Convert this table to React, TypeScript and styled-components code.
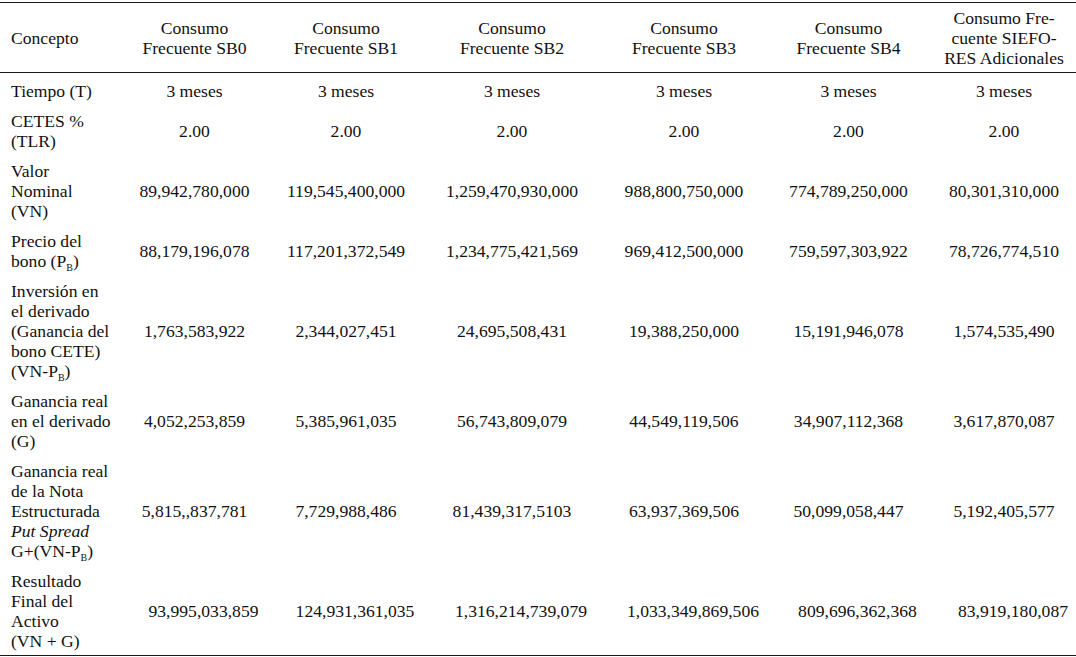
import React from "react";
import styled, { createGlobalStyle } from "styled-components";

const GlobalStyle = createGlobalStyle`
    html, body {
        margin: 0;
        padding: 0;
        background: #ffffff;
    }
    body {
        font-family: "Liberation Serif", "Times New Roman", serif;
        color: #111111;
    }
`;

const Table = styled.table`
    width: 1076px;
    margin-top: 2px;
    border-collapse: collapse;
    table-layout: fixed;
    font-family: "Liberation Serif", "Times New Roman", serif;
    font-size: 17.6px;
    line-height: 20px;
    color: #111111;
    border-top: 1px solid #1a1a1a;
    border-bottom: 1px solid #1a1a1a;
`;

const HeadCell = styled.th<{ $align: "left" | "center" }>`
    font-weight: normal;
    text-align: ${(p) => p.$align};
    vertical-align: middle;
    padding: 5px 4px 4px ${(p) => (p.$align === "left" ? "11px" : "4px")};
    border-bottom: 1px solid #1a1a1a;
    white-space: nowrap;
`;

const BodyRow = styled.tr<{ $first: boolean }>`
    & > td {
        padding-top: ${(p) => (p.$first ? "8px" : "6px")};
        padding-bottom: 4px;
    }
`;

const ConceptCell = styled.td`
    text-align: left;
    vertical-align: middle;
    padding-left: 11px;
    padding-right: 5px;
    white-space: nowrap;
`;

const ValueCell = styled.td<{ $shifted: boolean }>`
    text-align: center;
    vertical-align: middle;
    padding-left: ${(p) => (p.$shifted ? "20px" : "2px")};
    padding-right: 2px;
    white-space: nowrap;
`;

const Sub = styled.span`
    font-size: 10px;
    line-height: 0;
    vertical-align: -4px;
`;

const Italic = styled.i`
    font-style: italic;
`;

interface RowData {
    concept: React.ReactNode[];
    values: string[];
    shifted?: boolean;
}

const columnWidths = [118, 153, 150, 182, 162, 167, 144];

const headers: string[][] = [
    ["Consumo", "Frecuente SB0"],
    ["Consumo", "Frecuente SB1"],
    ["Consumo", "Frecuente SB2"],
    ["Consumo", "Frecuente SB3"],
    ["Consumo", "Frecuente SB4"],
    ["Consumo Fre-", "cuente SIEFO-", "RES Adicionales"],
];

const PB: React.FC = () => (
    <>
        P<Sub>B</Sub>
    </>
);

const rows: RowData[] = [
    {
        concept: ["Tiempo (T)"],
        values: ["3 meses", "3 meses", "3 meses", "3 meses", "3 meses", "3 meses"],
    },
    {
        concept: ["CETES %", "(TLR)"],
        values: ["2.00", "2.00", "2.00", "2.00", "2.00", "2.00"],
    },
    {
        concept: ["Valor", "Nominal", "(VN)"],
        values: [
            "89,942,780,000",
            "119,545,400,000",
            "1,259,470,930,000",
            "988,800,750,000",
            "774,789,250,000",
            "80,301,310,000",
        ],
    },
    {
        concept: [
            "Precio del",
            <>
                bono (<PB />)
            </>,
        ],
        values: [
            "88,179,196,078",
            "117,201,372,549",
            "1,234,775,421,569",
            "969,412,500,000",
            "759,597,303,922",
            "78,726,774,510",
        ],
    },
    {
        concept: [
            "Inversión en",
            "el derivado",
            "(Ganancia del",
            "bono CETE)",
            <>
                (VN-<PB />)
            </>,
        ],
        values: [
            "1,763,583,922",
            "2,344,027,451",
            "24,695,508,431",
            "19,388,250,000",
            "15,191,946,078",
            "1,574,535,490",
        ],
    },
    {
        concept: ["Ganancia real", "en el derivado", "(G)"],
        values: [
            "4,052,253,859",
            "5,385,961,035",
            "56,743,809,079",
            "44,549,119,506",
            "34,907,112,368",
            "3,617,870,087",
        ],
    },
    {
        concept: [
            "Ganancia real",
            "de la Nota",
            "Estructurada",
            <Italic>Put Spread</Italic>,
            <>
                G+(VN-<PB />)
            </>,
        ],
        values: [
            "5,815,,837,781",
            "7,729,988,486",
            "81,439,317,5103",
            "63,937,369,506",
            "50,099,058,447",
            "5,192,405,577",
        ],
    },
    {
        concept: ["Resultado", "Final del", "Activo", "(VN + G)"],
        values: [
            "93,995,033,859",
            "124,931,361,035",
            "1,316,214,739,079",
            "1,033,349,869,506",
            "809,696,362,368",
            "83,919,180,087",
        ],
        shifted: true,
    },
];

const App: React.FC = () => {
    return (
        <>
            <GlobalStyle />
            <Table>
                <colgroup>
                    {columnWidths.map((w, i) => (
                        <col key={i} style={{ width: w }} />
                    ))}
                </colgroup>
                <thead>
                    <tr>
                        <HeadCell $align="left">Concepto</HeadCell>
                        {headers.map((lines, i) => (
                            <HeadCell key={i} $align="center">
                                {lines.map((line, j) => (
                                    <React.Fragment key={j}>
                                        {j > 0 && <br />}
                                        {line}
                                    </React.Fragment>
                                ))}
                            </HeadCell>
                        ))}
                    </tr>
                </thead>
                <tbody>
                    {rows.map((row, i) => (
                        <BodyRow key={i} $first={i === 0}>
                            <ConceptCell>
                                {row.concept.map((line, j) => (
                                    <React.Fragment key={j}>
                                        {j > 0 && <br />}
                                        {line}
                                    </React.Fragment>
                                ))}
                            </ConceptCell>
                            {row.values.map((v, j) => (
                                <ValueCell key={j} $shifted={!!row.shifted}>
                                    {v}
                                </ValueCell>
                            ))}
                        </BodyRow>
                    ))}
                </tbody>
            </Table>
        </>
    );
};

export default App;
